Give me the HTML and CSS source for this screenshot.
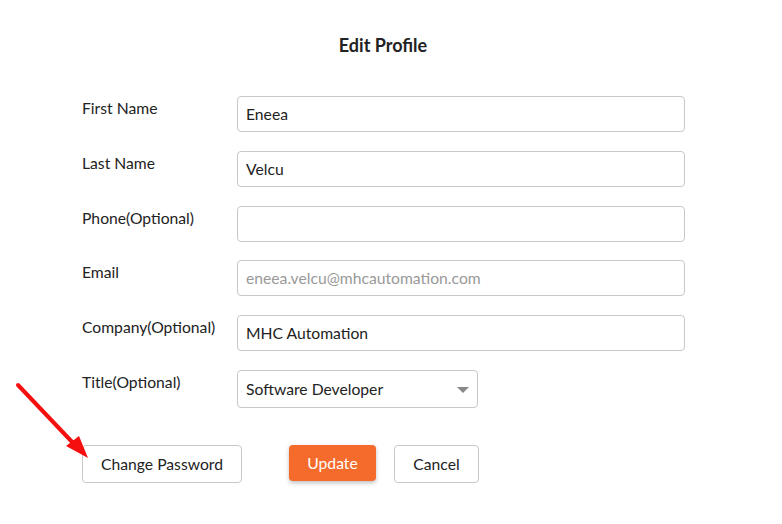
FILE: index.html
```html
<!DOCTYPE html>
<html lang="en">
<head>
    <meta charset="UTF-8">
    <title>Edit Profile</title>
    <link rel="stylesheet" href="styles.css">
</head>
<body>
    <div class="page">
        <h2 class="title">Edit Profile</h2>

        <form class="profile-form">
            <label for="firstName">First Name</label>
            <input type="text" id="firstName" value="Eneea">

            <label for="lastName">Last Name</label>
            <input type="text" id="lastName" value="Velcu">

            <label for="phone">Phone(Optional)</label>
            <input type="text" id="phone">

            <label for="email">Email</label>
            <input type="email" id="email" placeholder="eneea.velcu@mhcautomation.com" disabled>

            <label for="company">Company(Optional)</label>
            <input type="text" id="company" value="MHC Automation">

            <label for="title">Title(Optional)</label>
            <div class="select-wrap">
                <select id="title">
                    <option>Software Developer</option>
                </select>
            </div>
        </form>

        <div class="actions">
            <button class="btn btn-outline change-pw">Change Password</button>
            <button class="btn btn-primary">Update</button>
            <button class="btn btn-outline">Cancel</button>
        </div>

        <!-- red annotation arrow -->
        <svg class="annotation" width="100" height="90" viewBox="0 0 100 90">
            <line x1="18" y1="15" x2="74" y2="74" stroke="#f50f0f" stroke-width="4" stroke-linecap="round"/>
            <polygon points="88,88 66,76 79,66" fill="#f50f0f"/>
        </svg>
    </div>
</body>
</html>
```

FILE: styles.css
```css
/* General */
body {
    margin: 0;
    background: #fff;
    font-family: Lato, "Noto Sans", sans-serif;
    color: #222;
}

.page {
    position: relative;
    width: 782px;
    height: 524px;
    padding-top: 34px;
    box-sizing: border-box;
}

.title {
    margin: 0 0 40px;
    padding-right: 16px;
    text-align: center;
    font-size: 18px;
    font-weight: 700;
    line-height: 22px;
    color: #222;
}

/* Form grid */
.profile-form {
    display: grid;
    grid-template-columns: 155px 448px;
    row-gap: 18.8px;
    margin-left: 82px;
}

.profile-form label {
    font-size: 15.7px;
    line-height: 20px;
    padding-top: 2px;
    color: #222;
}

.profile-form input {
    height: 36px;
    box-sizing: border-box;
    border: 1px solid #c8c8c8;
    border-radius: 4px;
    padding: 0 8px;
    font-family: Lato, "Noto Sans", sans-serif;
    font-size: 15.7px;
    color: #222;
    background: #fff;
}

.profile-form input:disabled::placeholder {
    color: #999;
}

/* Select */
.select-wrap {
    position: relative;
    width: 241px;
}

.select-wrap select {
    width: 100%;
    height: 38px;
    box-sizing: border-box;
    border: 1px solid #c8c8c8;
    border-radius: 4px;
    padding: 0 8px;
    font-family: Lato, "Noto Sans", sans-serif;
    font-size: 15.7px;
    color: #222;
    background: #fff;
    appearance: none;
    -webkit-appearance: none;
}

.select-wrap::after {
    content: "";
    position: absolute;
    right: 9px;
    top: 17px;
    border-left: 6px solid transparent;
    border-right: 6px solid transparent;
    border-top: 6px solid #888;
}

/* Buttons */
.actions {
    display: flex;
    align-items: flex-start;
    margin: 37px 0 0 82px;
}

.btn {
    font-family: Lato, "Noto Sans", sans-serif;
    font-size: 15.7px;
    border-radius: 4px;
    cursor: pointer;
    box-sizing: border-box;
    padding: 0;
}

.btn-outline {
    height: 38px;
    background: #fff;
    border: 1px solid #c8c8c8;
    color: #222;
}

.change-pw {
    width: 160px;
    margin-right: 47px;
}

.btn-primary {
    width: 87px;
    height: 36px;
    background: #f46b2c;
    border: none;
    color: #fff;
    margin-right: 18px;
    box-shadow: 0 2px 4px rgba(0, 0, 0, 0.25);
}

.btn-outline:last-child {
    width: 85px;
}

/* Annotation */
.annotation {
    position: absolute;
    left: 0;
    top: 370px;
}
```
